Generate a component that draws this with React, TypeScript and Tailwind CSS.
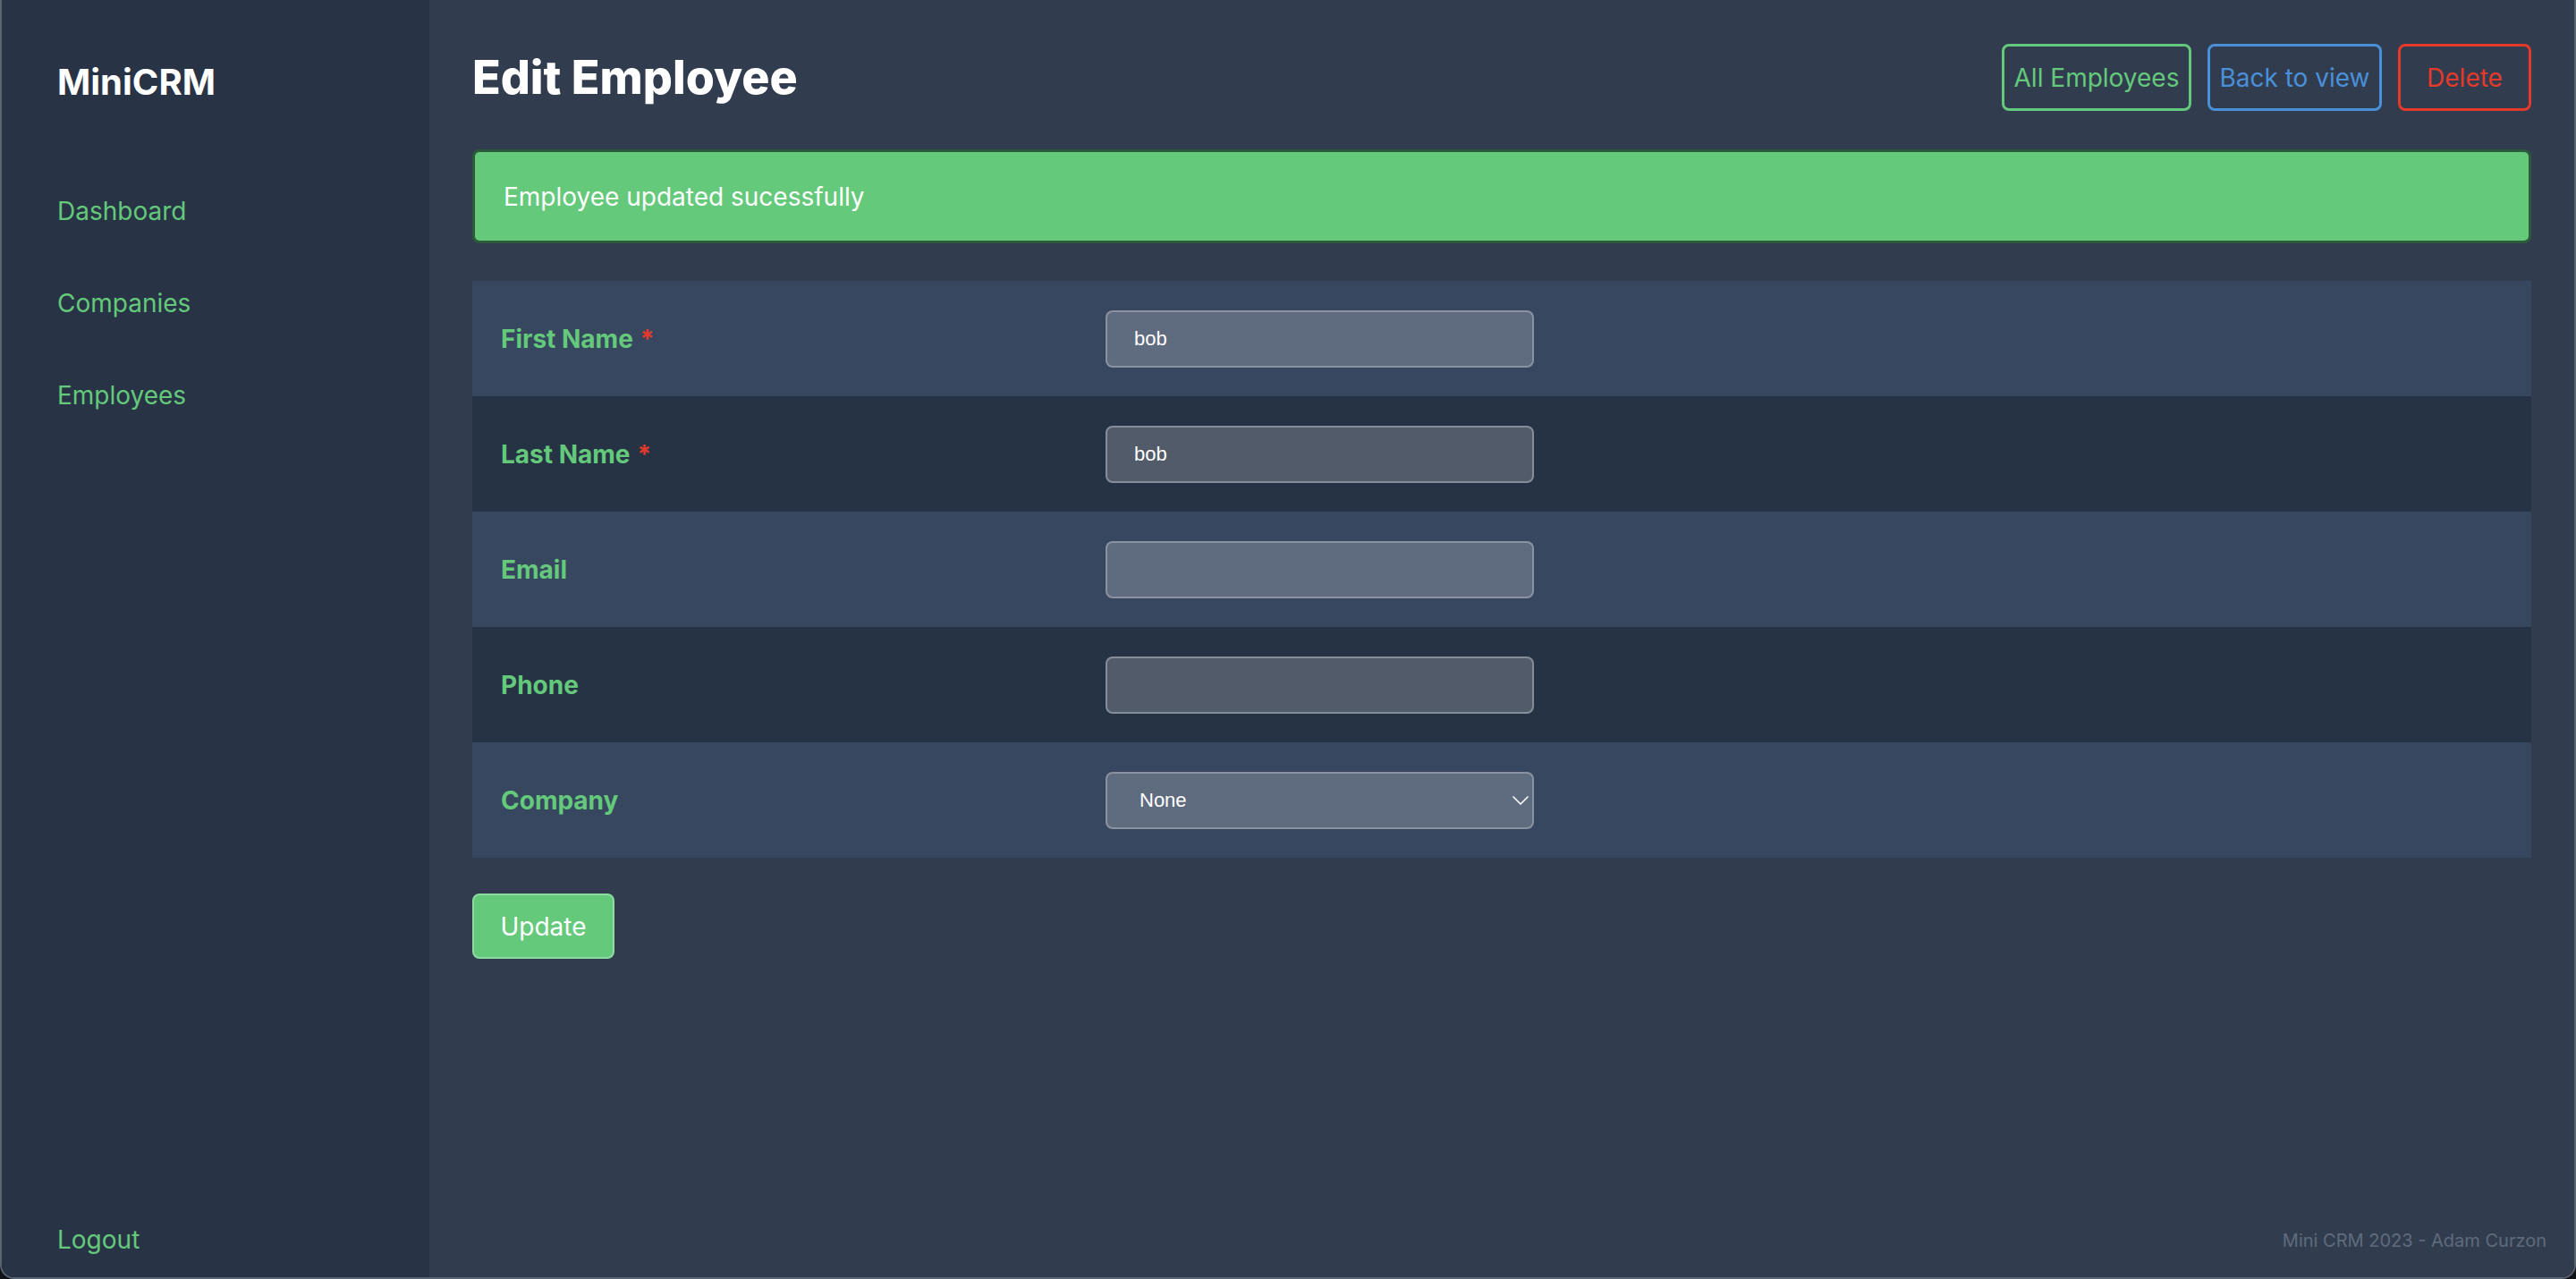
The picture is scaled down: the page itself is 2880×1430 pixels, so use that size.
import { ChevronDown } from 'lucide-react';

const fields = [
  { label: 'First Name', required: true, value: 'bob' },
  { label: 'Last Name', required: true, value: 'bob' },
  { label: 'Email', required: false, value: '' },
  { label: 'Phone', required: false, value: '' },
];

const navItems = ['Dashboard', 'Companies', 'Employees'];

function Sidebar() {
  return (
    <aside className="flex w-[478px] shrink-0 flex-col bg-[#283446] pl-[62px] pt-[62px] pb-[21px]">
      <div className="text-[40px] font-bold leading-[60px] text-white">MiniCRM</div>

      <nav className="mt-[93px] flex flex-col gap-[61px]">
        {navItems.map((item) => (
          <a key={item} className="text-[28px] leading-[42px] text-[#64c97b]">
            {item}
          </a>
        ))}
      </nav>

      <a className="mt-auto text-[28px] leading-[42px] text-[#64c97b]">Logout</a>
    </aside>
  );
}

function FormRow({ index, children, label, required }: { index: number; children: React.ReactNode; label: string; required?: boolean }) {
  return (
    <div className={`flex h-[129px] items-center ${index % 2 === 0 ? 'bg-[#374760]' : 'bg-[#263344]'}`}>
      <div className="w-[708px] shrink-0 pl-[32px] text-[28px] font-bold text-[#64c97b]">
        {label}
        {required && <span className="ml-[8px] text-[#e5392b]">*</span>}
      </div>
      {children}
    </div>
  );
}

export default function App() {
  return (
    <div className="h-[1430px] w-[2880px] bg-[#101418]" style={{ fontFamily: 'Inter, "Noto Sans", sans-serif' }}>
      <div className="flex h-full w-full overflow-hidden rounded-b-[16px] border-x-2 border-b-2 border-[#5b6472]">
        <Sidebar />

        <main className="flex flex-1 flex-col bg-[#313d4f]">
          <div className="px-[48px] pt-[49px]">
            {/* Header */}
            <div className="flex items-center justify-between">
              <h1 className="text-[52px] font-extrabold leading-[75px] text-white">Edit Employee</h1>
              <div className="flex gap-[18px]">
                <button className="flex h-[75px] w-[212px] items-center justify-center rounded-[8px] border-[3px] border-[#64c97b] text-[28px] text-[#64c97b]">
                  All Employees
                </button>
                <button className="flex h-[75px] w-[195px] items-center justify-center rounded-[8px] border-[3px] border-[#4a90d9] text-[28px] text-[#4a90d9]">
                  Back to view
                </button>
                <button className="flex h-[75px] w-[149px] items-center justify-center rounded-[8px] border-[3px] border-[#e5392b] text-[28px] text-[#e5392b]">
                  Delete
                </button>
              </div>
            </div>

            {/* Alert */}
            <div className="mt-[43px] flex h-[105px] items-center rounded-[8px] border-[3px] border-[#2c5a3a] bg-[#64c97b] pl-[32px] text-[28px] text-white">
              Employee updated sucessfully
            </div>

            {/* Form */}
            <div className="mt-[42px]">
              {fields.map((f, i) => (
                <FormRow key={f.label} index={i} label={f.label} required={f.required}>
                  <input
                    readOnly
                    value={f.value}
                    className="h-[64px] w-[479px] rounded-[8px] border-2 border-[#9ca3af]/70 bg-white/20 px-[30px] text-[22px] text-white outline-none"
                    style={{ fontFamily: '"Liberation Sans", Arial, sans-serif' }}
                  />
                </FormRow>
              ))}
              <FormRow index={4} label="Company">
                <div
                  className="relative flex h-[64px] w-[479px] items-center rounded-[8px] border-2 border-[#9ca3af]/70 bg-white/20 pl-[36px] text-[22px] text-white"
                  style={{ fontFamily: '"Liberation Sans", Arial, sans-serif' }}
                >
                  None
                  <ChevronDown className="absolute right-[-3px] top-1/2 h-[32px] w-[32px] -translate-y-1/2 text-white" strokeWidth={1.25} />
                </div>
              </FormRow>
            </div>

            <button className="mt-[40px] flex h-[73px] w-[159px] items-center justify-center rounded-[8px] border-2 border-[#8fdca2] bg-[#64c97b] text-[28px] text-white">
              Update
            </button>
          </div>

          <footer className="mt-auto pb-[26px] pr-[31px] text-right text-[20px] leading-[30px] text-[#5f6b7c]">
            Mini CRM 2023 - Adam Curzon
          </footer>
        </main>
      </div>
    </div>
  );
}
